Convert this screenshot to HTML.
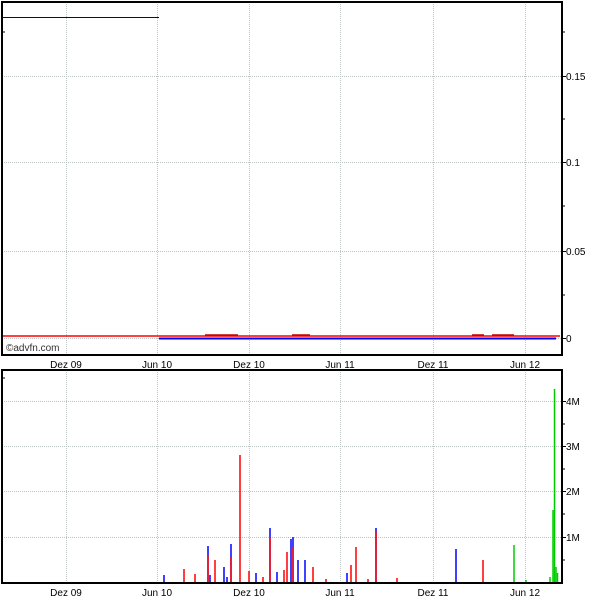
<!DOCTYPE html><html><head><style>body{margin:0;background:#fff}svg{display:block}text{font-family:"Liberation Sans",sans-serif;font-size:10px;fill:#000}</style></head><body>
<svg width="600" height="600" xmlns="http://www.w3.org/2000/svg">
<g stroke="#bcc4c4" stroke-width="1" stroke-dasharray="1,1">
<line x1="66.5" y1="2" x2="66.5" y2="355"/><line x1="157.5" y1="2" x2="157.5" y2="355"/><line x1="249.5" y1="2" x2="249.5" y2="355"/><line x1="340.5" y1="2" x2="340.5" y2="355"/><line x1="433.5" y1="2" x2="433.5" y2="355"/><line x1="525.5" y1="2" x2="525.5" y2="355"/>
<line x1="2" y1="76.5" x2="562" y2="76.5"/><line x1="2" y1="162.5" x2="562" y2="162.5"/><line x1="2" y1="251.5" x2="562" y2="251.5"/><line x1="2" y1="338.5" x2="562" y2="338.5"/>
<line x1="66.5" y1="370" x2="66.5" y2="583"/><line x1="157.5" y1="370" x2="157.5" y2="583"/><line x1="249.5" y1="370" x2="249.5" y2="583"/><line x1="340.5" y1="370" x2="340.5" y2="583"/><line x1="433.5" y1="370" x2="433.5" y2="583"/><line x1="525.5" y1="370" x2="525.5" y2="583"/>
<line x1="2" y1="401.5" x2="562" y2="401.5"/><line x1="2" y1="446.5" x2="562" y2="446.5"/><line x1="2" y1="491.5" x2="562" y2="491.5"/><line x1="2" y1="537.5" x2="562" y2="537.5"/>
</g>
<line x1="2" y1="17.5" x2="159" y2="17.5" stroke="#0000a0" stroke-width="1"/>
<line x1="159" y1="338.5" x2="556" y2="338.5" stroke="#0000ff" stroke-width="2"/>
<line x1="2" y1="336" x2="560" y2="336" stroke="#ff0000" stroke-width="1.5"/>
<g stroke="#c00000" stroke-width="1.5"><line x1="292" y1="335" x2="310" y2="335"/><line x1="472" y1="335" x2="484" y2="335"/><line x1="492" y1="335" x2="514" y2="335"/><line x1="205" y1="335" x2="238" y2="335"/></g>
<g stroke="#000" stroke-width="2" fill="none">
<rect x="2" y="2" width="560" height="353"/><rect x="2" y="370" width="560" height="213"/>
</g>
<g stroke="#000"><line x1="562" y1="32" x2="565" y2="32"/><line x1="562" y1="76.5" x2="566" y2="76.5"/><line x1="562" y1="162.5" x2="566" y2="162.5"/><line x1="562" y1="251.5" x2="566" y2="251.5"/><line x1="562" y1="338.5" x2="566" y2="338.5"/><line x1="562" y1="119" x2="565" y2="119"/><line x1="562" y1="206" x2="565" y2="206"/><line x1="562" y1="295" x2="565" y2="295"/>
<line x1="562" y1="401.5" x2="566" y2="401.5"/><line x1="562" y1="446.5" x2="566" y2="446.5"/><line x1="562" y1="491.5" x2="566" y2="491.5"/><line x1="562" y1="537.5" x2="566" y2="537.5"/><line x1="562" y1="424" x2="565" y2="424"/><line x1="562" y1="469" x2="565" y2="469"/><line x1="562" y1="514" x2="565" y2="514"/><line x1="562" y1="560" x2="565" y2="560"/>
<line x1="2" y1="32" x2="5" y2="32"/><line x1="2" y1="378" x2="5" y2="378"/></g>
<text x="566" y="80">0.15</text><text x="566" y="166">0.1</text><text x="566" y="255">0.05</text><text x="566" y="342">0</text>
<text x="566" y="405">4M</text><text x="566" y="450">3M</text><text x="566" y="495">2M</text><text x="566" y="541">1M</text>
<text x="6" y="351" style="font-size:10px;fill:#333">©advfn.com</text>
<g text-anchor="middle"><text x="66" y="368">Dez 09</text><text x="157" y="368">Jun 10</text><text x="249" y="368">Dez 10</text><text x="340" y="368">Jun 11</text><text x="433" y="368">Dez 11</text><text x="525" y="368">Jun 12</text>
<text x="66" y="596">Dez 09</text><text x="157" y="596">Jun 10</text><text x="249" y="596">Dez 10</text><text x="340" y="596">Jun 11</text><text x="433" y="596">Dez 11</text><text x="525" y="596">Jun 12</text></g>
<g stroke-width="1.5">
<line x1="164" y1="575" x2="164" y2="582" stroke="#00f"/>
<line x1="184" y1="569" x2="184" y2="582" stroke="#f00"/>
<line x1="195" y1="574" x2="195" y2="582" stroke="#f00"/>
<line x1="208" y1="546" x2="208" y2="582" stroke="#00f"/><line x1="208" y1="555" x2="208" y2="582" stroke="#f00"/>
<line x1="210" y1="575" x2="210" y2="582" stroke="#00f"/>
<line x1="215" y1="560" x2="215" y2="582" stroke="#f00"/>
<line x1="224" y1="567" x2="224" y2="582" stroke="#00f"/>
<line x1="227" y1="577" x2="227" y2="582" stroke="#00f"/>
<line x1="231" y1="544" x2="231" y2="582" stroke="#00f"/><line x1="231" y1="558" x2="231" y2="582" stroke="#f00"/>
<line x1="240" y1="455" x2="240" y2="582" stroke="#f00"/>
<line x1="249" y1="571" x2="249" y2="582" stroke="#f00"/>
<line x1="256" y1="573" x2="256" y2="582" stroke="#00f"/>
<line x1="263" y1="577" x2="263" y2="582" stroke="#f00"/>
<line x1="270" y1="528" x2="270" y2="582" stroke="#00f"/><line x1="270" y1="537" x2="270" y2="582" stroke="#f00"/>
<line x1="277" y1="572" x2="277" y2="582" stroke="#00f"/>
<line x1="284" y1="570" x2="284" y2="582" stroke="#f00"/>
<line x1="287" y1="552" x2="287" y2="582" stroke="#f00"/>
<line x1="291" y1="539" x2="291" y2="582" stroke="#00f"/>
<line x1="293" y1="537" x2="293" y2="582" stroke="#00f"/><line x1="293" y1="548" x2="293" y2="582" stroke="#f00"/>
<line x1="298" y1="560" x2="298" y2="582" stroke="#00f"/>
<line x1="305" y1="560" x2="305" y2="582" stroke="#00f"/>
<line x1="313" y1="567" x2="313" y2="582" stroke="#f00"/>
<line x1="326" y1="579" x2="326" y2="582" stroke="#f00"/>
<line x1="347" y1="573" x2="347" y2="582" stroke="#00f"/>
<line x1="351" y1="565" x2="351" y2="582" stroke="#f00"/>
<line x1="356" y1="547" x2="356" y2="582" stroke="#f00"/>
<line x1="368" y1="579" x2="368" y2="582" stroke="#f00"/>
<line x1="376" y1="528" x2="376" y2="582" stroke="#00f"/><line x1="376" y1="532" x2="376" y2="582" stroke="#f00"/>
<line x1="397" y1="578" x2="397" y2="582" stroke="#f00"/>
<line x1="456" y1="549" x2="456" y2="582" stroke="#00f"/>
<line x1="483" y1="560" x2="483" y2="582" stroke="#f00"/>
<line x1="514" y1="545" x2="514" y2="582" stroke="#0c0"/>
<line x1="526" y1="580" x2="526" y2="582" stroke="#0c0"/>
<line x1="550" y1="577" x2="550" y2="582" stroke="#0c0"/>
<line x1="553" y1="510" x2="553" y2="582" stroke="#0c0"/>
<line x1="554.5" y1="389" x2="554.5" y2="582" stroke="#0c0"/>
<line x1="556" y1="567" x2="556" y2="582" stroke="#0c0"/>
<line x1="557.5" y1="573" x2="557.5" y2="582" stroke="#0c0"/>
</g>
</svg></body></html>
